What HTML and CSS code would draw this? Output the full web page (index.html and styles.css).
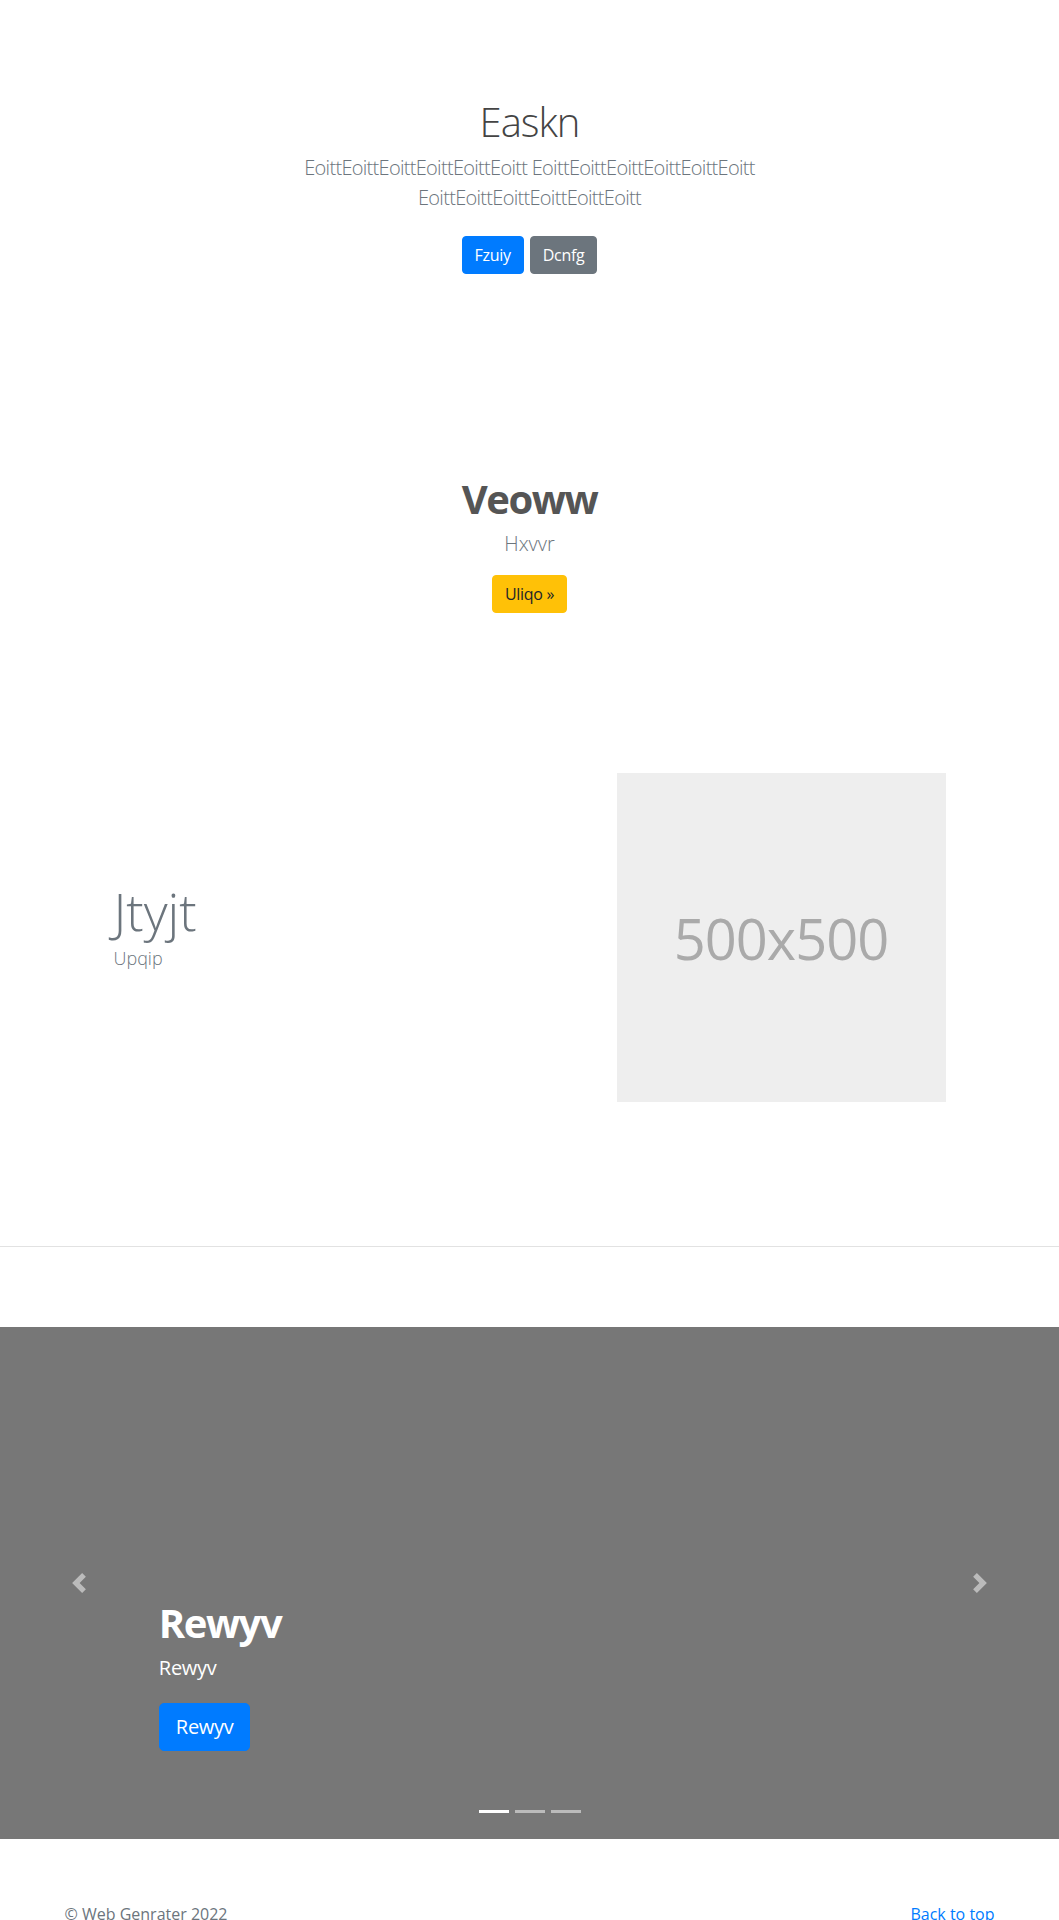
FILE: index.html
```html
<!DOCTYPE html>
<html lang="en">
<head>
<meta charset="utf-8">
<title>Easkn</title>
<link rel="stylesheet" href="styles.css">
</head>
<body>
<main>
  <section class="hero">
    <h1 class="hero-title">Easkn</h1>
    <p class="lead hero-lead">EoittEoittEoittEoittEoittEoitt EoittEoittEoittEoittEoittEoitt EoittEoittEoittEoittEoittEoitt</p>
    <div class="hero-actions">
      <a class="btn btn-primary" href="#">Fzuiy</a>
      <a class="btn btn-secondary" href="#">Dcnfg</a>
    </div>
  </section>

  <section class="cta">
    <h2 class="cta-title">Veoww</h2>
    <p class="lead cta-lead">Hxvvr</p>
    <a class="btn btn-warning" href="#">Uliqo &raquo;</a>
  </section>

  <section class="feature">
    <div class="feature-text">
      <h2 class="feature-title">Jtyjt</h2>
      <p class="feature-sub">Upqip</p>
    </div>
    <div class="feature-img"><span>500x500</span></div>
  </section>

  <hr class="divider">

  <div class="carousel">
    <a class="carousel-control prev" href="#" aria-label="Previous">
      <svg viewBox="0 0 8 8" width="20" height="20"><path d="M5.25 0l-4 4 4 4 1.5-1.5L4.25 4l2.5-2.5L5.25 0z"/></svg>
    </a>
    <a class="carousel-control next" href="#" aria-label="Next">
      <svg viewBox="0 0 8 8" width="20" height="20"><path d="M2.75 0l-1.5 1.5L3.75 4l-2.5 2.5L2.75 8l4-4-4-4z"/></svg>
    </a>
    <div class="carousel-caption">
      <h1 class="caption-title">Rewyv</h1>
      <p class="caption-text">Rewyv</p>
      <div class="caption-actions"><a class="btn btn-lg btn-primary" href="#">Rewyv</a></div>
    </div>
    <ol class="carousel-indicators">
      <li class="active"></li>
      <li></li>
      <li></li>
    </ol>
  </div>
</main>

<footer class="footer">
  <div class="footer-inner">
    <p class="footer-copy">&copy; Web Genrater 2022</p>
    <a class="footer-top" href="#">Back to top</a>
  </div>
</footer>
</body>
</html>
```

FILE: styles.css
```css
* { box-sizing: border-box; }

html, body {
  margin: 0;
  padding: 0;
}

body {
  font-family: "Open Sans", "Noto Sans", "Liberation Sans", sans-serif;
  font-size: 16px;
  line-height: 1.5;
  color: #212529;
  background: #fff;
}

h1, h2, p { margin: 0; }

.btn {
  display: inline-block;
  font-size: 16px;
  line-height: 24px;
  padding: 6px 12px;
  border: 1px solid transparent;
  border-radius: 4px;
  text-decoration: none;
  font-weight: 400;
  letter-spacing: -0.3px;
  vertical-align: middle;
}
.btn-lg {
  font-size: 20px;
  line-height: 30px;
  padding: 8px 16px;
  border-radius: 5px;
}
.btn-primary { background: #007bff; border-color: #007bff; color: #fff; }
.btn-secondary { background: #6c757d; border-color: #6c757d; color: #fff; }
.btn-warning { background: #ffc107; border-color: #ffc107; color: #212529; }

.lead {
  font-size: 20px;
  line-height: 30px;
  font-weight: 300;
  color: #6c757d;
}

/* Hero */
.hero {
  text-align: center;
  padding-top: 98px;
}
.hero-title {
  font-size: 40px;
  line-height: 48px;
  font-weight: 300;
  color: #444;
  letter-spacing: -1px;
  margin-bottom: 7px;
}
.hero-lead {
  max-width: 462px;
  margin: 0 auto;
  letter-spacing: -0.7px;
}
.hero-actions {
  margin-top: 23px;
  display: flex;
  justify-content: center;
  gap: 6px;
}

/* CTA */
.cta {
  text-align: center;
  margin-top: 201px;
}
.cta-title {
  font-size: 40px;
  line-height: 48px;
  font-weight: 700;
  color: #555;
  letter-spacing: -1.5px;
  margin-bottom: 6px;
}
.cta-lead { margin-bottom: 16px; }

/* Feature */
.feature {
  max-width: 960px;
  margin: 160px auto 0;
  padding: 0 64px;
  display: flex;
  align-items: center;
}
.feature-text {
  flex: 1;
  padding-bottom: 24px;
}
.feature-title {
  font-size: 52px;
  line-height: 62px;
  font-weight: 300;
  color: #6c757d;
  margin-bottom: 3px;
}
.feature-sub {
  font-size: 18px;
  line-height: 27px;
  font-weight: 300;
  color: #6c757d;
}
.feature-img {
  width: 329px;
  height: 329px;
  background: #eee;
  color: #aaa;
  display: flex;
  align-items: center;
  justify-content: center;
  font-size: 56px;
  font-weight: 400;
  letter-spacing: -1px;
}

.divider {
  margin: 144px 0 0;
  border: 0;
  border-top: 1px solid #e2e2e2;
  height: 0;
}

/* Carousel */
.carousel {
  position: relative;
  margin-top: 80px;
  height: 512px;
  background: #777;
}
.carousel-control {
  position: absolute;
  top: 0;
  bottom: 0;
  width: 15%;
  display: flex;
  align-items: center;
  justify-content: center;
  opacity: 0.5;
}
.carousel-control svg { fill: #fff; display: block; }
.carousel-control.prev { left: 0; }
.carousel-control.next { right: 0; }

.carousel-caption {
  position: absolute;
  left: 15%;
  right: 15%;
  bottom: 88px;
  color: #fff;
  text-align: left;
}
.caption-title {
  font-size: 40px;
  line-height: 48px;
  font-weight: 700;
  letter-spacing: -1.5px;
  margin-bottom: 6px;
}
.caption-text {
  font-size: 20px;
  line-height: 30px;
  font-weight: 400;
  letter-spacing: -0.3px;
  margin-bottom: 20px;
}
.caption-actions { display: flex; }

.carousel-indicators {
  position: absolute;
  left: 0;
  right: 0;
  bottom: 26px;
  margin: 0;
  padding: 0;
  list-style: none;
  display: flex;
  justify-content: center;
}
.carousel-indicators li {
  width: 30px;
  height: 3px;
  margin: 0 3px;
  background: rgba(255, 255, 255, 0.5);
}
.carousel-indicators li.active { background: #fff; }

/* Footer */
.footer {
  padding-top: 63px;
  padding-bottom: 48px;
}
.footer-inner {
  max-width: 960px;
  margin: 0 auto;
  padding: 0 15px;
  display: flex;
  justify-content: space-between;
  align-items: flex-start;
}
.footer-copy { color: #6c757d; }
.footer-top { color: #007bff; text-decoration: none; }
```
